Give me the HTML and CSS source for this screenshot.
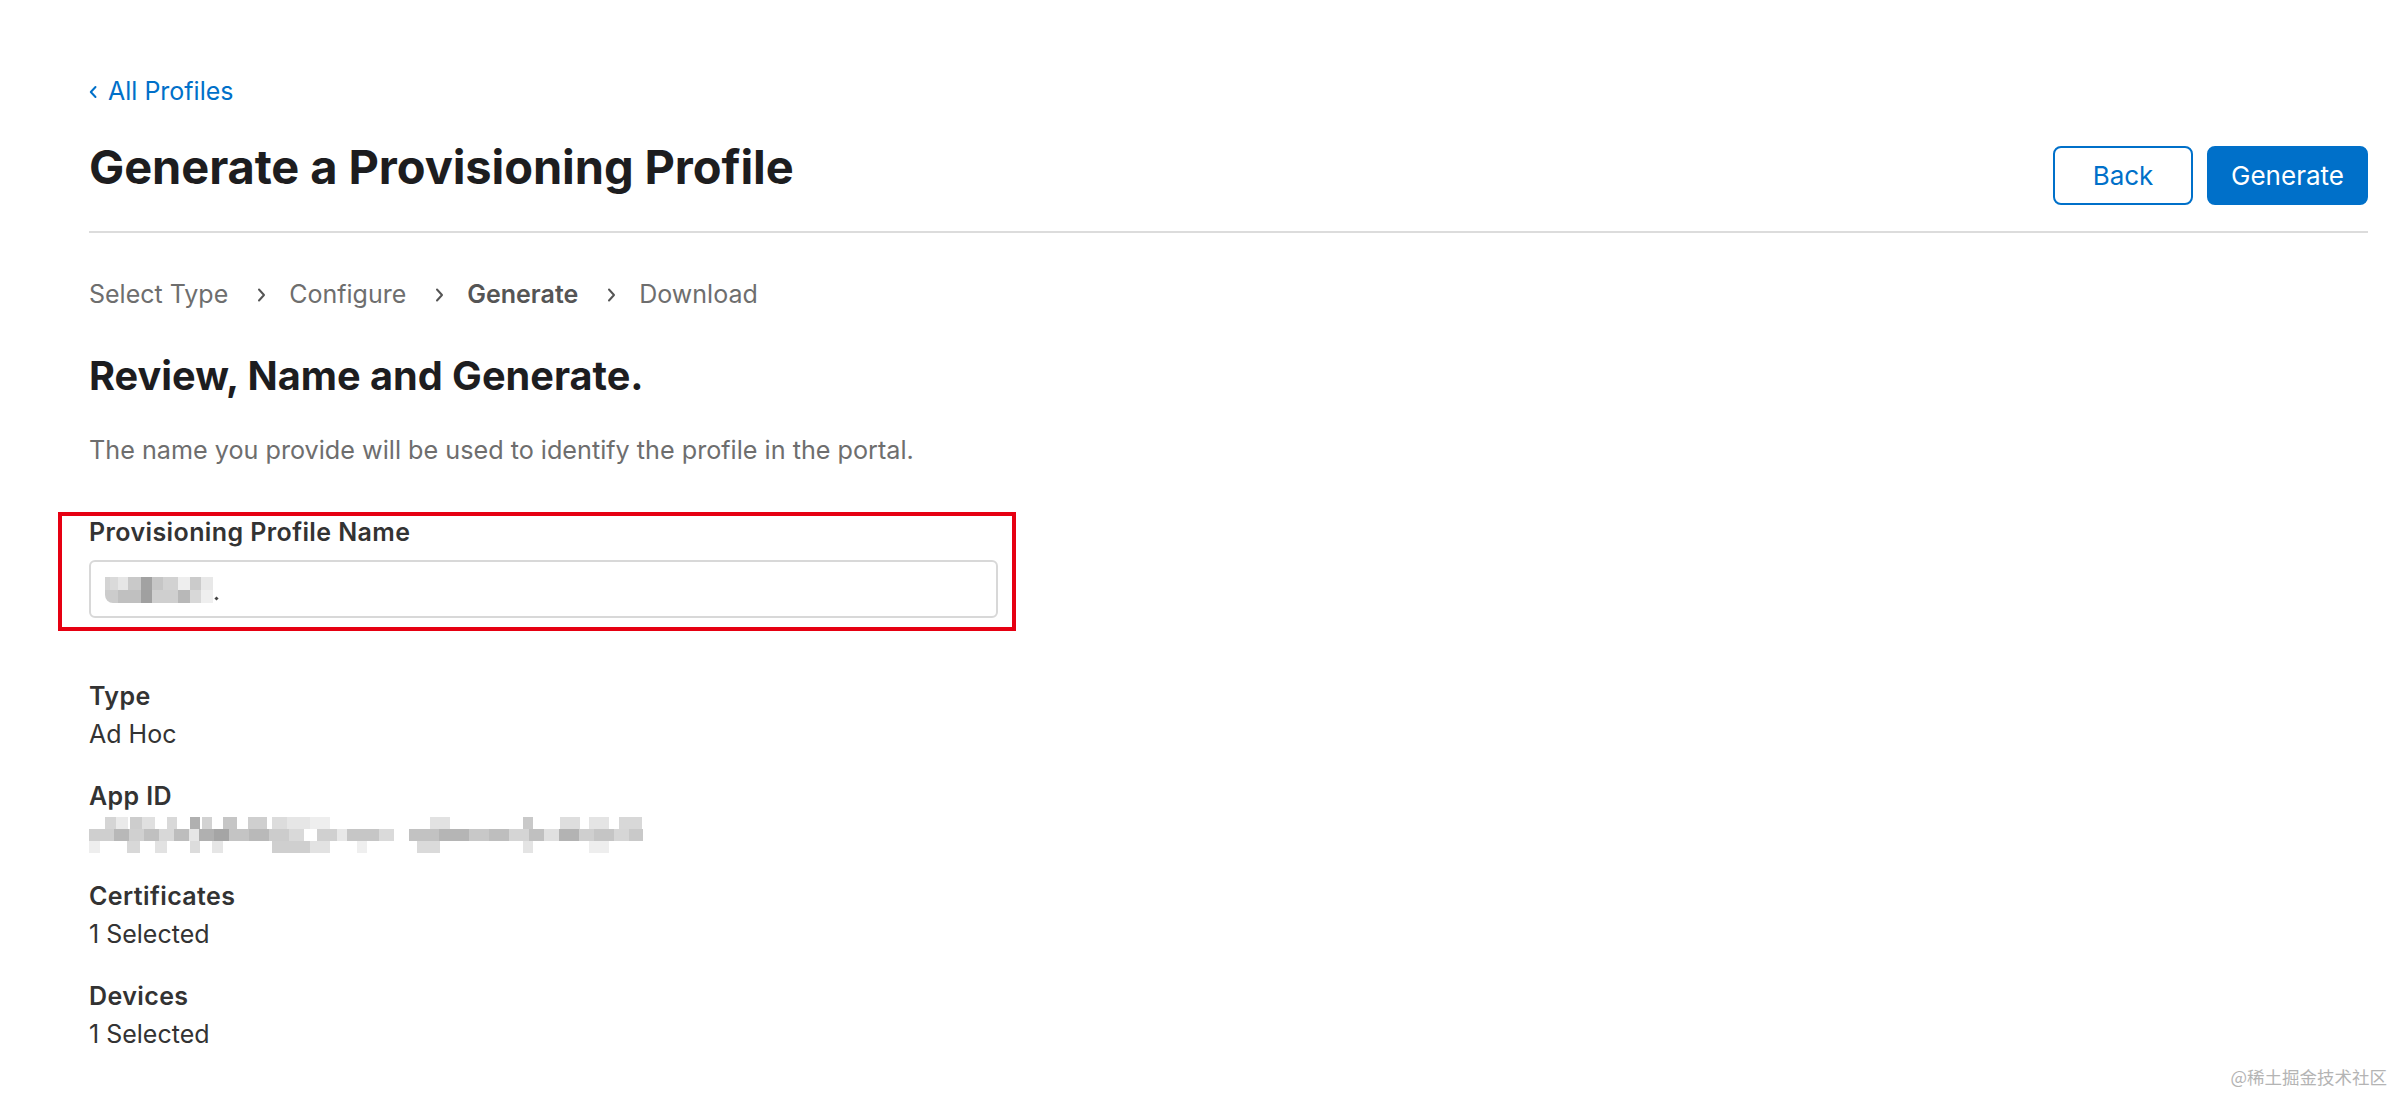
FILE: index.html
```html
<!DOCTYPE html>
<html lang="en">
<head>
<meta charset="utf-8">
<title>Generate a Provisioning Profile</title>
<link rel="stylesheet" href="styles.css">
</head>
<body>
<div class="page">
  <a class="back-link" href="#">
    <svg class="back-chev" width="8" height="14" viewBox="0 0 8 14"><path d="M6.5 2 L1.8 7 L6.5 12" fill="none" stroke="#0070c9" stroke-width="2" stroke-linecap="round" stroke-linejoin="round"/></svg>
    <span>All Profiles</span>
  </a>

  <div class="header-row">
    <h1 class="title">Generate a Provisioning Profile</h1>
    <div class="actions">
      <button class="btn btn-outline">Back</button>
      <button class="btn btn-primary">Generate</button>
    </div>
  </div>

  <nav class="steps">
    <span class="step">Select Type</span>
    <svg class="step-chev" width="9" height="14" viewBox="0 0 9 14"><path d="M2 1.5 L7 7 L2 12.5" fill="none" stroke="#555" stroke-width="2" stroke-linecap="round" stroke-linejoin="round"/></svg>
    <span class="step">Configure</span>
    <svg class="step-chev" width="9" height="14" viewBox="0 0 9 14"><path d="M2 1.5 L7 7 L2 12.5" fill="none" stroke="#555" stroke-width="2" stroke-linecap="round" stroke-linejoin="round"/></svg>
    <span class="step step-active">Generate</span>
    <svg class="step-chev" width="9" height="14" viewBox="0 0 9 14"><path d="M2 1.5 L7 7 L2 12.5" fill="none" stroke="#555" stroke-width="2" stroke-linecap="round" stroke-linejoin="round"/></svg>
    <span class="step">Download</span>
  </nav>

  <h2 class="section-title">Review, Name and Generate.</h2>
  <p class="desc">The name you provide will be used to identify the profile in the portal.</p>

  <div class="name-field">
    <div class="highlight"></div>
    <label class="field-label">Provisioning Profile Name</label>
    <div class="input">
      <div class="mosaic-input">
        <div class="mi-row mi-top"></div>
        <div class="mi-row mi-bottom"></div>
      </div>
      <span class="caret-dot"></span>
    </div>
  </div>

  <dl class="details">
    <div class="detail">
      <dt>Type</dt>
      <dd>Ad Hoc</dd>
    </div>
    <div class="detail">
      <dt>App ID</dt>
      <dd class="mosaic-value">
        <div class="ma-row ma-r1"></div>
        <div class="ma-row ma-r2"></div>
        <div class="ma-row ma-r3"></div>
      </dd>
    </div>
    <div class="detail">
      <dt>Certificates</dt>
      <dd>1 Selected</dd>
    </div>
    <div class="detail">
      <dt>Devices</dt>
      <dd>1 Selected</dd>
    </div>
  </dl>

  <div class="watermark">@稀土掘金技术社区</div>
</div>
</body>
</html>
```

FILE: styles.css
```css
* { box-sizing: border-box; }

html, body {
  margin: 0;
  padding: 0;
  background: #ffffff;
}

body {
  font-family: Inter, "Noto Sans", "Liberation Sans", sans-serif;
  color: #333333;
}

.page {
  position: relative;
  min-height: 1094px;
  padding: 76px 28px 0 89px;
}

.back-link {
  display: inline-flex;
  align-items: center;
  gap: 11px;
  color: #0070c9;
  text-decoration: none;
  font-size: 25px;
  line-height: 30px;
}

.back-chev { margin-top: 2px; }

.header-row {
  display: flex;
  justify-content: space-between;
  align-items: flex-start;
  margin-top: 34px;
  padding-bottom: 26px;
  border-bottom: 2px solid #dcdcdc;
}

.title {
  margin: 0;
  font-size: 47px;
  line-height: 54px;
  font-weight: 700;
  color: #1d1d1f;
  letter-spacing: -0.1px;
}

.actions {
  display: flex;
  gap: 14px;
  margin-top: 6px;
}

.btn {
  height: 59px;
  border-radius: 8px;
  font-family: Inter, "Noto Sans", sans-serif;
  font-size: 26px;
  padding: 0 22px;
  cursor: pointer;
}

.btn-outline {
  min-width: 140px;
  background: #ffffff;
  color: #0070c9;
  border: 2px solid #0070c9;
}

.btn-primary {
  min-width: 161px;
  background: #0070c9;
  color: #ffffff;
  border: 2px solid #0070c9;
}

.steps {
  display: flex;
  align-items: center;
  margin-top: 46px;
  font-size: 25px;
  line-height: 30px;
  color: #6e6e6e;
}

.step-chev {
  margin: 2px 23px 0 29px;
}

.step-active {
  font-weight: 600;
  color: #555555;
}

.section-title {
  margin: 44px 0 0;
  font-size: 39.7px;
  line-height: 46px;
  font-weight: 700;
  color: #1d1d1f;
}

.desc {
  margin: 36px 0 0;
  font-size: 25.2px;
  line-height: 30px;
  color: #6e6e6e;
}

.name-field {
  position: relative;
  margin-top: 52px;
  width: 909px;
}

.highlight {
  position: absolute;
  left: -31px;
  top: -5px;
  width: 958px;
  height: 119px;
  border: 4px solid #e60012;
  pointer-events: none;
}

.field-label {
  display: block;
  font-size: 25px;
  line-height: 30px;
  font-weight: 600;
  letter-spacing: 0.4px;
  color: #333333;
}

.input {
  display: flex;
  align-items: center;
  margin-top: 13px;
  height: 58px;
  border: 2px solid #d8d8d8;
  border-radius: 6px;
  padding-left: 14px;
  background: #fff;
}

.mosaic-input {
  width: 108px;
  height: 26px;
  display: flex;
  flex-direction: column;
  margin-top: 2px;
}

.mi-row { height: 13px; }

.mi-top {
  background: linear-gradient(to right,
    #d4d4d4 0 5px, #dadada 5px 13px, #e6e6e6 13px 23px, #c9c9c9 23px 36px,
    #a2a2a2 36px 47px, #c6c6c6 47px 58px, #d2d2d2 58px 73px, #eeeeee 73px 85px,
    #cbcbcb 85px 96px, #e8e8e8 96px 108px);
}

.mi-bottom {
  border-bottom-left-radius: 8px;
  background: linear-gradient(to right,
    #cccccc 0 13px, #c0c0c0 13px 36px, #a0a0a0 36px 47px, #cfcfcf 47px 73px,
    #b8b8b8 73px 85px, #d8d8d8 85px 96px, #efefef 96px 108px);
}

.caret-dot {
  width: 3px;
  height: 3px;
  background: #444;
  transform: rotate(45deg);
  margin: 18px 0 0 2px;
}

.details {
  margin: 59px 0 0;
  padding: 0;
}

.detail + .detail { margin-top: 24px; }

.detail dt {
  font-size: 25px;
  line-height: 38px;
  font-weight: 600;
  letter-spacing: 0.4px;
  color: #333333;
}

.detail dd {
  margin: 0;
  font-size: 25px;
  line-height: 38px;
  color: #333333;
}

.mosaic-value {
  height: 38px;
  width: 554px;
  padding-top: 2px;
}

.ma-row { height: 12px; width: 554px; }

.ma-r1 {
  background: linear-gradient(to right,
    transparent 0 16px, #d5d5d5 16px 27px, #eaeaea 27px 39px, transparent 39px 41px,
    #cdcdcd 41px 53px, #e0e0e0 53px 66px, transparent 66px 78px, #d9d9d9 78px 88px,
    transparent 88px 101px, #b0b0b0 101px 111px, transparent 111px 113px, #d2d2d2 113px 123px,
    transparent 123px 134px, #c6c6c6 134px 148px, transparent 148px 159px, #cfcfcf 159px 178px,
    transparent 178px 183px, #dcdcdc 183px 198px, #e6e6e6 198px 221px, #eeeeee 221px 241px,
    transparent 241px 341px, #e2e2e2 341px 361px, transparent 361px 434px, #c9c9c9 434px 444px,
    transparent 444px 471px, #dedede 471px 491px, transparent 491px 500px, #e4e4e4 500px 520px,
    transparent 520px 530px, #d8d8d8 530px 553px, transparent 553px);
}

.ma-r2 {
  background: linear-gradient(to right,
    #cfcfcf 0 25px, #b8b8b8 25px 40px, #d0d0d0 40px 55px, #c0c0c0 55px 70px,
    #d8d8d8 70px 85px, #bdbdbd 85px 100px, #e6e6e6 100px 110px, #b0b0b0 110px 125px,
    #a5a5a5 125px 140px, #c4c4c4 140px 160px, #b9b9b9 160px 180px, #cccccc 180px 200px,
    #d9d9d9 200px 215px, #ffffff 215px 228px, #d0d0d0 228px 248px, #e8e8e8 248px 258px,
    #c6c6c6 258px 290px, #dadada 290px 305px, #ffffff 305px 320px, #c2c2c2 320px 350px,
    #b5b5b5 350px 380px, #c8c8c8 380px 400px, #bebebe 400px 420px, #d5d5d5 420px 440px,
    #c0c0c0 440px 455px, #e0e0e0 455px 470px, #b3b3b3 470px 490px, #cfcfcf 490px 505px,
    #c5c5c5 505px 525px, #d6d6d6 525px 540px, #c9c9c9 540px 554px);
}

.ma-r3 {
  background: linear-gradient(to right,
    #eeeeee 0 11px, transparent 11px 38px, #d8d8d8 38px 51px, transparent 51px 66px,
    #e2e2e2 66px 78px, transparent 78px 101px, #dcdcdc 101px 111px, transparent 111px 123px,
    #e6e6e6 123px 134px, transparent 134px 183px, #cfcfcf 183px 221px, #e2e2e2 221px 241px,
    transparent 241px 268px, #efefef 268px 278px, transparent 278px 328px, #dadada 328px 351px,
    transparent 351px 434px, #e4e4e4 434px 444px, transparent 444px 500px, #eeeeee 500px 520px,
    transparent 520px);
}

.watermark {
  position: absolute;
  right: 9px;
  bottom: 6px;
  font-family: "Noto Sans CJK SC", "Noto Sans", sans-serif;
  font-size: 17.5px;
  line-height: 22px;
  color: #b4b4b4;
}
```
